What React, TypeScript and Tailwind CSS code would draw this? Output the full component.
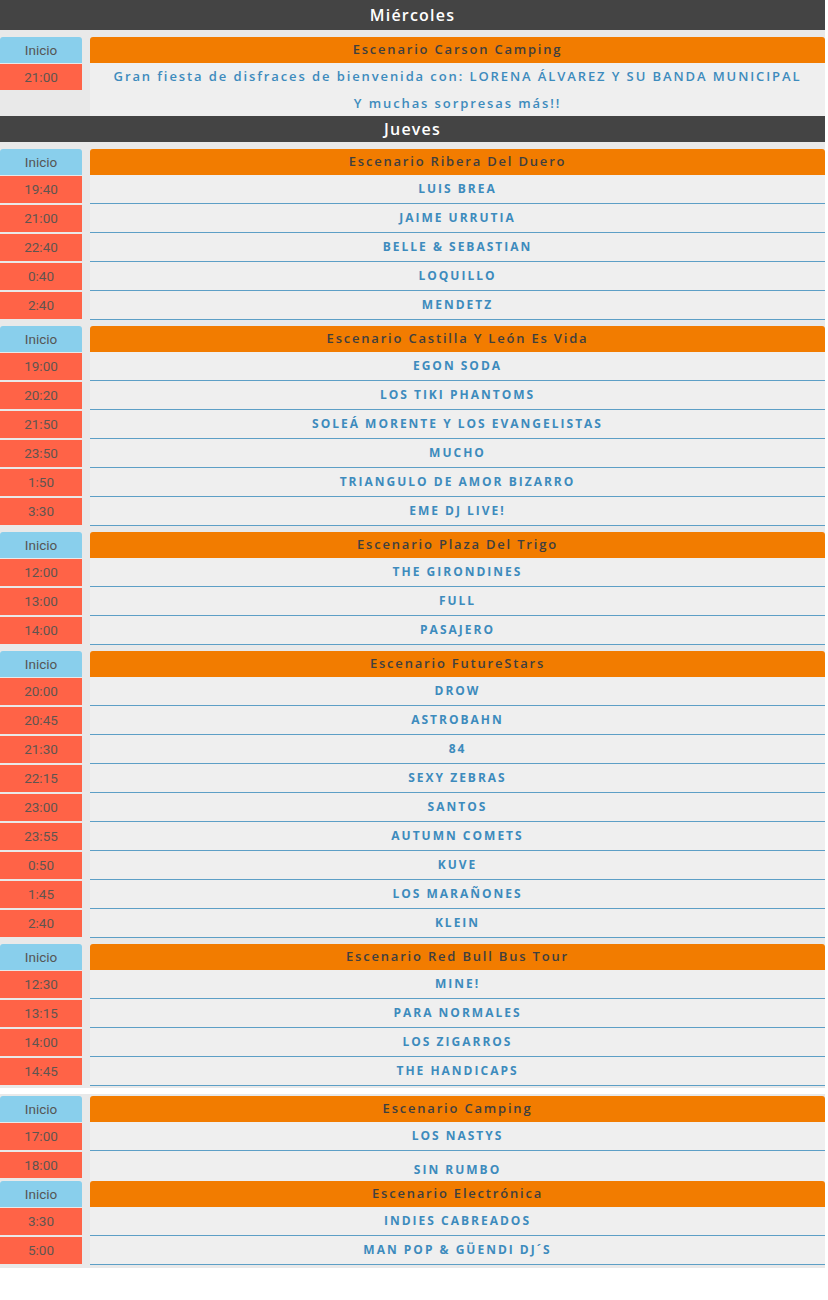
import React from "react";

type Stage = { name: string; rows: [string, string][] };

const jueves: Stage[] = [
  {
    name: "Escenario Ribera Del Duero",
    rows: [
      ["19:40", "LUIS BREA"],
      ["21:00", "JAIME URRUTIA"],
      ["22:40", "BELLE & SEBASTIAN"],
      ["0:40", "LOQUILLO"],
      ["2:40", "MENDETZ"],
    ],
  },
  {
    name: "Escenario Castilla Y León Es Vida",
    rows: [
      ["19:00", "EGON SODA"],
      ["20:20", "LOS TIKI PHANTOMS"],
      ["21:50", "SOLEÁ MORENTE Y LOS EVANGELISTAS"],
      ["23:50", "MUCHO"],
      ["1:50", "TRIANGULO DE AMOR BIZARRO"],
      ["3:30", "EME DJ LIVE!"],
    ],
  },
  {
    name: "Escenario Plaza Del Trigo",
    rows: [
      ["12:00", "THE GIRONDINES"],
      ["13:00", "FULL"],
      ["14:00", "PASAJERO"],
    ],
  },
  {
    name: "Escenario FutureStars",
    rows: [
      ["20:00", "DROW"],
      ["20:45", "ASTROBAHN"],
      ["21:30", "84"],
      ["22:15", "SEXY ZEBRAS"],
      ["23:00", "SANTOS"],
      ["23:55", "AUTUMN COMETS"],
      ["0:50", "KUVE"],
      ["1:45", "LOS MARAÑONES"],
      ["2:40", "KLEIN"],
    ],
  },
  {
    name: "Escenario Red Bull Bus Tour",
    rows: [
      ["12:30", "MINE!"],
      ["13:15", "PARA NORMALES"],
      ["14:00", "LOS ZIGARROS"],
      ["14:45", "THE HANDICAPS"],
    ],
  },
];

const font = { fontFamily: '"Open Sans", "DejaVu Sans", sans-serif' };
const timeFont = { fontFamily: 'Roboto, "Liberation Sans", sans-serif' };

function DayHeader({ label, tall }: { label: string; tall?: boolean }) {
  return (
    <div
      className={
        (tall ? "h-[30px] " : "h-[26px] ") +
        "bg-[#444444] text-white text-[16px] font-semibold tracking-[1.2px] flex items-center justify-center"
      }
      style={font}
    >
      {label}
    </div>
  );
}

function StageHeader({ name }: { name: string }) {
  return (
    <div className="flex h-[26px] gap-[8px]">
      <div
        className="w-[82px] bg-[#89cfec] rounded-t-[3px] text-[#555555] text-[13.5px] flex items-center justify-center"
        style={timeFont}
      >
        Inicio
      </div>
      <div
        className="w-[735px] bg-[#f27c00] rounded-t-[3px] text-[#3f3f3f] text-[13px] font-semibold tracking-[1.8px] flex items-center justify-center"
        style={font}
      >
        {name}
      </div>
    </div>
  );
}

function Row({ time, artist }: { time: string; artist: string }) {
  return (
    <div className="flex h-[29px] gap-[8px]">
      <div
        className="w-[82px] h-[27px] mt-[1px] bg-[#ff6347] text-[#5f5550] text-[13.5px] flex items-center justify-center"
        style={timeFont}
      >
        {time}
      </div>
      <div
        className="w-[735px] bg-[#efefef] text-[#3d8bbd] text-[12px] font-bold tracking-[2px] flex items-center justify-center border-b border-[#5d9fc6]"
        style={font}
      >
        {artist}
      </div>
    </div>
  );
}

export default function App() {
  return (
    <div className="w-[828px] bg-white">
      <div className="w-[825px] bg-[#e9e9e9] pb-[3px]">
        <DayHeader label="Miércoles" tall />
        <div className="pt-[7px]">
          <StageHeader name="Escenario Carson Camping" />
          <div className="flex gap-[8px]">
            <div className="flex flex-col">
              <div
                className="w-[82px] h-[26px] mt-[1px] bg-[#ff6347] text-[#5f5550] text-[13.5px] flex items-center justify-center"
                style={timeFont}
              >
                21:00
              </div>
            </div>
            <div
              className="w-[735px] bg-[#efefef] text-[#3d8bbd] text-[13px] font-semibold tracking-[1.9px] text-center leading-[26.5px]"
              style={font}
            >
              <div>Gran fiesta de disfraces de bienvenida con: LORENA ÁLVAREZ Y SU BANDA MUNICIPAL</div>
              <div>Y muchas sorpresas más!!</div>
            </div>
          </div>
        </div>
        <DayHeader label="Jueves" />
        <div className="pt-[7px] flex flex-col gap-[6px]">
          {jueves.map((s) => (
            <div key={s.name}>
              <StageHeader name={s.name} />
              {s.rows.map(([t, a], i) => (
                <Row key={i} time={t} artist={a} />
              ))}
            </div>
          ))}
        </div>
        <div className="h-[6px] bg-white mt-[2px] mb-[2px] w-[828px]" />
        <div>
          <StageHeader name="Escenario Camping" />
          <Row time="17:00" artist="LOS NASTYS" />
          <div className="flex h-[30px] gap-[8px]">
            <div
              className="w-[82px] h-[26px] mt-[1px] bg-[#ff6347] text-[#5f5550] text-[13.5px] flex items-center justify-center"
              style={timeFont}
            >
              18:00
            </div>
            <div
              className="w-[735px] bg-[#efefef] text-[#3d8bbd] text-[12px] font-bold tracking-[2px] flex items-end justify-center pb-[2px]"
              style={font}
            >
              SIN RUMBO
            </div>
          </div>
          <StageHeader name="Escenario Electrónica" />
          <Row time="3:30" artist="INDIES CABREADOS" />
          <Row time="5:00" artist="MAN POP & GÜENDI DJ´S" />
        </div>
      </div>
      <div className="h-[30px]" />
    </div>
  );
}
